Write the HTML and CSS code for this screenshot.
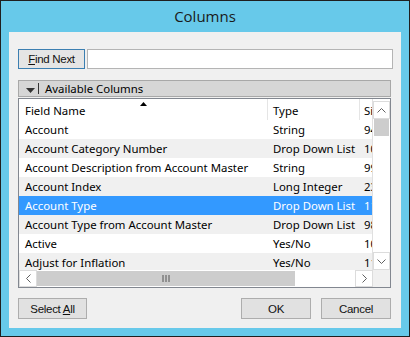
FILE: index.html
```html
<!DOCTYPE html>
<html lang="en">
<head>
    <meta charset="UTF-8">
    <title>Columns</title>
    <link rel="stylesheet" href="styles.css">
</head>
<body>
    <div class="window">
        <div class="title">Columns</div>
        <div class="client">
            <div class="find-row">
                <button class="btn default"><u>F</u>ind Next</button>
                <input class="find-input" type="text">
            </div>

            <div class="group-bar">
                <svg class="group-arrow" width="9" height="5" viewBox="0 0 9 5"><path d="M0 0H9L4.5 5Z" fill="#333"/></svg>
                <span class="group-sep"></span>
                <span>Available Columns</span>
            </div>

            <div class="list">
                <div class="list-main">
                    <div class="list-view">
                        <div class="row header">
                            <div class="cell c-name">Field Name
                                <svg class="sort" width="7" height="4" viewBox="0 0 7 4"><path d="M0 4L3.5 0L7 4Z" fill="#000"/></svg>
                            </div>
                            <div class="cell c-type">Type</div>
                            <div class="cell c-size">Size</div>
                        </div>
                        <div class="row"><div class="cell c-name">Account</div><div class="cell c-type">String</div><div class="cell c-size">94</div></div>
                        <div class="row alt"><div class="cell c-name">Account Category Number</div><div class="cell c-type">Drop Down List</div><div class="cell c-size">10</div></div>
                        <div class="row"><div class="cell c-name">Account Description from Account Master</div><div class="cell c-type">String</div><div class="cell c-size">99</div></div>
                        <div class="row alt"><div class="cell c-name">Account Index</div><div class="cell c-type">Long Integer</div><div class="cell c-size">23</div></div>
                        <div class="row selected"><div class="cell c-name">Account Type</div><div class="cell c-type">Drop Down List</div><div class="cell c-size">11</div></div>
                        <div class="row alt"><div class="cell c-name">Account Type from Account Master</div><div class="cell c-type">Drop Down List</div><div class="cell c-size">98</div></div>
                        <div class="row"><div class="cell c-name">Active</div><div class="cell c-type">Yes/No</div><div class="cell c-size">10</div></div>
                        <div class="row alt"><div class="cell c-name">Adjust for Inflation</div><div class="cell c-type">Yes/No</div><div class="cell c-size">11</div></div>
                    </div>
                    <div class="vscroll">
                        <div class="arrow-box">
                            <svg width="9" height="5" viewBox="0 0 9 5"><path d="M0.5 4.5L4.5 0.5L8.5 4.5" fill="none" stroke="#606060"/></svg>
                        </div>
                        <div class="vthumb"></div>
                        <div class="vtrack"></div>
                        <div class="arrow-box">
                            <svg width="9" height="5" viewBox="0 0 9 5"><path d="M0.5 0.5L4.5 4.5L8.5 0.5" fill="none" stroke="#606060"/></svg>
                        </div>
                    </div>
                </div>
                <div class="hscroll-row">
                    <div class="hscroll">
                        <div class="arrow-box h">
                            <svg width="5" height="9" viewBox="0 0 5 9"><path d="M4.5 0.5L0.5 4.5L4.5 8.5" fill="none" stroke="#606060"/></svg>
                        </div>
                        <div class="hthumb">
                            <svg width="8" height="7" viewBox="0 0 8 7"><path d="M1 0V7M4 0V7M7 0V7" stroke="#555"/></svg>
                        </div>
                        <div class="htrack"></div>
                        <div class="arrow-box h">
                            <svg width="5" height="9" viewBox="0 0 5 9"><path d="M0.5 0.5L4.5 4.5L0.5 8.5" fill="none" stroke="#606060"/></svg>
                        </div>
                    </div>
                    <div class="corner"></div>
                </div>
            </div>

            <div class="bottom-row">
                <button class="btn wide">Select <u>A</u>ll</button>
                <div class="spacer"></div>
                <button class="btn wide">OK</button>
                <button class="btn wide">Cancel</button>
            </div>
        </div>
    </div>
</body>
</html>
```

FILE: styles.css
```css
body {
    margin: 0;
    padding: 0;
    font-family: 'Noto Sans', sans-serif;
    font-size: 11.4px;
    color: #000;
}

.window {
    width: 410px;
    height: 337px;
    box-sizing: border-box;
    background: #67c9ea;
    border: 1px solid #1f1f1f;
    padding: 0 8px 8px;
    display: flex;
    flex-direction: column;
}

.title {
    height: 31px;
    line-height: 31px;
    text-align: center;
    font-family: 'Open Sans', sans-serif;
    font-size: 15px;
    color: #1a1a1a;
}

.client {
    flex: 1;
    background: #f0f0f0;
    padding: 17px 10px 0 9px;
    display: flex;
    flex-direction: column;
}

.btn {
    font-family: 'Liberation Sans', sans-serif;
    font-size: 11.5px;
    letter-spacing: -0.3px;
    height: 21px;
    padding: 0;
    background: #e1e1e1;
    border: 1px solid #adadad;
    color: #111;
}
.btn.default {
    width: 67px;
    height: 20px;
    border-color: #3c7fb1;
    background: #e5e5e5;
}
.btn.wide { width: 70px; }

.find-row {
    display: flex;
    gap: 2px;
    margin-right: -2px;
}
.find-input {
    flex: 1;
    height: 20px;
    box-sizing: border-box;
    border: 1px solid #b4b4b4;
    background: #fff;
    margin: 0;
}

.group-bar {
    margin-top: 11px;
    height: 17px;
    box-sizing: border-box;
    background: #d6d6d6;
    border: 1px solid #a8a8a8;
    display: flex;
    align-items: center;
    padding-left: 7px;
}
.group-arrow { margin-top: 3px; }
.group-sep {
    width: 1px;
    height: 11px;
    background: #333;
    margin: 0 6px 0 3px;
}

.list {
    margin-top: 1px;
    height: 190px;
    box-sizing: border-box;
    border: 1px solid #828790;
    background: #fff;
    display: flex;
    flex-direction: column;
}
.list-main {
    flex: 1;
    display: flex;
    overflow: hidden;
}
.list-view {
    flex: 1;
    overflow: hidden;
}
.row {
    display: flex;
    height: 19px;
    line-height: 19px;
    white-space: nowrap;
}
.row.alt { background: #f0f0f0; }
.row.selected {
    background: #3399ff;
    color: #fff;
}
.row.header {
    height: 21px;
    line-height: 23px;
    background: #fff;
}
.cell {
    overflow: hidden;
    box-sizing: border-box;
    flex: none;
}
.c-name { width: 249px; padding-left: 6px; position: relative; }
.c-type { width: 92px; padding-left: 5px; }
.c-size { width: 40px; padding-left: 4px; }
.header .cell { border-right: 1px solid #e5e5e5; }
.sort {
    position: absolute;
    left: 121px;
    top: 3px;
}

.vscroll {
    width: 17px;
    flex: none;
    display: flex;
    flex-direction: column;
    background: #fff;
    border-left: 1px solid #e0e0e0;
    padding-top: 2px;
}
.arrow-box {
    height: 16px;
    display: flex;
    align-items: center;
    justify-content: center;
    background: #fff;
    border: 1px solid #dcdcdc;
    flex: none;
}
.vthumb {
    height: 17px;
    background: #cdcdcd;
    margin: 0 1px;
}
.vtrack { flex: 1; }

.hscroll-row {
    height: 17px;
    display: flex;
    flex: none;
}
.hscroll {
    flex: 1;
    display: flex;
}
.arrow-box.h {
    width: 16px;
    height: auto;
}
.hthumb {
    width: 258px;
    background: #cdcdcd;
    margin: 1px 0;
    display: flex;
    align-items: center;
    justify-content: center;
}
.htrack { flex: 1; }
.corner {
    width: 17px;
    background: #f0f0f0;
}

.bottom-row {
    margin-top: 10px;
    display: flex;
    gap: 10px;
}
.bottom-row .btn:first-child { width: 69px; }
.spacer { flex: 1; }
```
